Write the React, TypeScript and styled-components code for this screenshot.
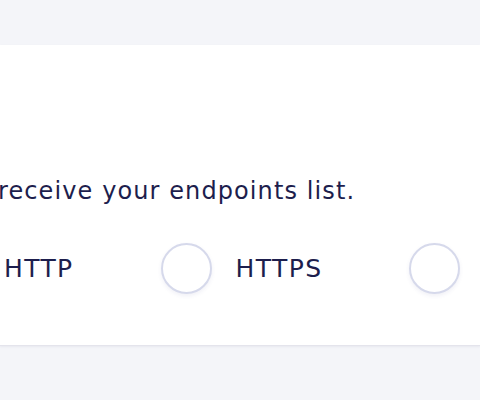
import React from "react";
import styled, { createGlobalStyle } from "styled-components";

const Global = createGlobalStyle`
  html, body { margin: 0; padding: 0; background: #f4f5f9; overflow: hidden; }
  body { font-family: "DejaVu Sans", Verdana, sans-serif; width: 480px; height: 400px; }
`;

const Page = styled.div`
  padding-top: 45px;
  width: 480px;
`;

const Card = styled.section`
  background: #ffffff;
  height: 301px;
  border-bottom: 1px solid #e4e4ec;
  box-shadow: 0 1px 2px rgba(30, 30, 80, 0.06);
  box-sizing: border-box;
  padding-top: 130px;
  overflow: hidden;
`;

const Hint = styled.p`
  margin: 0 0 0 -2px;
  font-size: 24px;
  letter-spacing: 1.1px;
  line-height: 32px;
  color: #1d1e4d;
  white-space: nowrap;
`;

const Options = styled.div`
  display: flex;
  align-items: center;
  gap: 87px;
  margin: 36px 0 0 -71px;
`;

const Option = styled.label`
  display: flex;
  align-items: center;
  gap: 24px;
  font-size: 25px;
  letter-spacing: 1.4px;
  color: #1d1e4d;
  white-space: nowrap;
`;

const Radio = styled.span`
  flex: none;
  width: 51px;
  height: 51px;
  border-radius: 50%;
  border: 2px solid #d6d9eb;
  box-sizing: border-box;
  background: #fff;
  box-shadow: 0 2px 4px rgba(60, 70, 140, 0.08);
`;

export default function App() {
  return (
    <>
      <Global />
      <Page>
        <Card>
          <Hint>receive your endpoints list.</Hint>
          <Options>
            <Option><Radio />HTTP</Option>
            <Option><Radio />HTTPS</Option>
            <Option aria-label="TCP"><Radio /></Option>
          </Options>
        </Card>
      </Page>
    </>
  );
}
